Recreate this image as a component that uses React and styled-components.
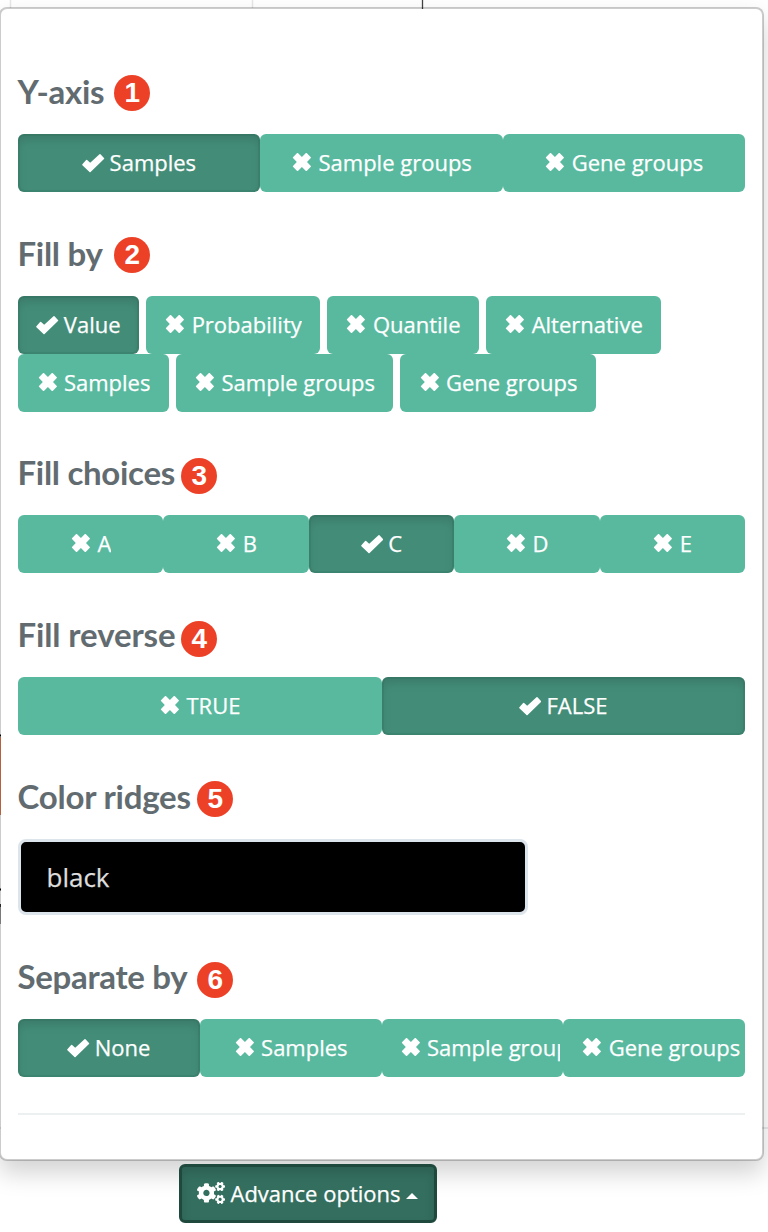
import React from "react";
import styled, { createGlobalStyle, css } from "styled-components";
import { FaCogs } from "react-icons/fa";

const GlobalStyle = createGlobalStyle`
  *, *::before, *::after { box-sizing: border-box; }
  html, body { margin: 0; overflow: hidden; background: #fff; }
  button, input { font-family: "Open Sans", sans-serif; }
`;

const Page = styled.main`
  position: relative;
  width: 768px;
  height: 1232px;
  padding-top: 7px;
  overflow: hidden;
  background: #fff;
  font-family: "Open Sans", sans-serif;
`;

/* Parts of the plot behind the menu that peek out around its edges */
const Plot = styled.svg`
  position: absolute;
  inset: 0;
`;

const Menu = styled.div`
  position: relative;
  width: 765px;
  height: 1154px;
  margin-left: -1px;
  padding: 67px 17px 0;
  border: 2px solid rgba(0, 0, 0, 0.2);
  border-radius: 8px;
  background: #fff;
  background-clip: padding-box;
  box-shadow: 0 12px 24px rgba(0, 0, 0, 0.175);
`;

const Section = styled.section`
  margin-bottom: ${(p) => p.$gap ?? 46}px;
`;

const Heading = styled.div`
  display: flex;
  align-items: flex-start;
  height: 58px;
`;

const Title = styled.h4`
  flex: none;
  width: ${(p) => p.$width}px;
  margin: -1px 0 0 -0.5px;
  color: #626c70;
  font: 700 33px/33px Lato, sans-serif;
  letter-spacing: ${(p) => p.$tracking}px;
  white-space: nowrap;
`;

const Badge = styled.span`
  display: flex;
  align-items: center;
  justify-content: center;
  width: 36px;
  height: 36px;
  margin-top: ${(p) => p.$drop}px;
  border-radius: 50%;
  background: #ed4127;
  color: #fff;
  font: 700 28px/36px "Liberation Sans", sans-serif;
`;

const Group = styled.div`
  display: flex;
`;

const WrapGroup = styled.div`
  display: flex;
  flex-wrap: wrap;
  column-gap: 7px;
`;

const Choice = styled.button`
  display: flex;
  flex: ${(p) => (p.$width ? `0 0 ${p.$width}px` : `0 0 ${100 / p.$share}%`)};
  min-width: 0;
  height: 58px;
  align-items: center;
  justify-content: ${(p) => (p.$clip ? "flex-start" : "center")};
  padding: ${(p) => (p.$clip ? "0 3.5px 2px 18px" : "0 0 2px")};
  border: 0;
  border-radius: 6px;
  background: #58b99f;
  color: #fff;
  font-size: 22px;
  line-height: 30px;
  white-space: nowrap;
  -webkit-text-stroke: 0.25px #fff;
  ${(p) =>
    p.$active &&
    css`
      background: #438d78;
      box-shadow: inset 0 0 0 2px rgba(30, 90, 70, 0.14), inset 0 6px 10px rgba(0, 0, 0, 0.125);
    `}
`;

const ChoiceLabel = styled.span`
  display: flex;
  min-width: 0;
  align-items: center;
  overflow: hidden;
`;

const Mark = styled.svg`
  flex: none;
  width: 22.4px;
  height: 20px;
  margin: ${(p) => (p.$checked ? 1 : -1)}px 5px 0 0;
  fill: currentColor;
`;

const ColorInput = styled.input`
  display: block;
  width: 510px;
  height: 76px;
  padding: 0 25.5px;
  border: 3px solid #dce4ec;
  border-radius: 8px;
  outline: 0;
  background: #000;
  color: #ddd;
  font-size: 26px;
  -webkit-text-stroke: 0.25px #ddd;
`;

const Divider = styled.hr`
  height: 2px;
  margin: 36px 0 0;
  border: 0;
  background: #ecf0f1;
`;

const Toggle = styled.button`
  position: relative;
  display: flex;
  align-items: center;
  width: 258px;
  height: 59px;
  margin: 3px 0 0 179px;
  padding: 0 15px 2px;
  border: 3px solid #20493e;
  border-radius: 6px;
  background: #336e5e;
  box-shadow: inset 0 6px 10px rgba(0, 0, 0, 0.125);
  color: #fff;
  font-size: 22px;
  line-height: 30px;
  white-space: nowrap;
  -webkit-text-stroke: 0.25px #fff;
`;

const CogsIcon = styled(FaCogs)`
  flex: none;
  width: 28px;
  height: 22px;
  margin: 1px 5.5px 0 0;
`;

const Caret = styled.span`
  margin: 7px 0 0 6px;
  border: 6px solid transparent;
  border-top: 0;
  border-bottom-color: #fff;
`;

function ChoiceMark({ checked }) {
  return (
    <Mark viewBox="0 0 22.4 20" $checked={checked} aria-hidden="true">
      {checked ? (
        <path d="M.4 11.2 4.1 6.9q.5-.5 1 0L8.2 9.8 17.5 1.3q.5-.5 1 0L22 5q.5.5 0 1L8.6 19q-.6.5-1.1 0L.4 12.2q-.5-.5 0-1Z" />
      ) : (
        <path d="M6.1 1.1q.4-.4.8 0L10.9 4.9l4-3.8q.4-.4.8 0l4.1 4.1q.4.4 0 .8L16 10l3.8 4q.4.4 0 .8l-4.1 4.1q-.4.4-.8 0l-4-3.8-4 3.8q-.4.4-.8 0L2 14.8q-.4-.4 0-.8l3.8-4L2 6q-.4-.4 0-.8Z" />
      )}
    </Mark>
  );
}

function Option({ label, active, width, share, clip }) {
  return (
    <Choice type="button" $active={active} $width={width} $share={share} $clip={clip}>
      <ChoiceLabel>
        <ChoiceMark checked={active} />
        {label}
      </ChoiceLabel>
    </Choice>
  );
}

function Field({ title, number, titleWidth, tracking = -0.3, drop = 0, gap, children }) {
  return (
    <Section $gap={gap}>
      <Heading>
        <Title $width={titleWidth} $tracking={tracking}>{title}</Title>
        <Badge $drop={drop}>{number}</Badge>
      </Heading>
      {children}
    </Section>
  );
}

export default function App() {
  return (
    <>
      <GlobalStyle />
      <Page>
        <Plot width="768" height="1232" aria-hidden="true">
          <path d="M10.5 0V8M252.5 0V8" stroke="#e6e6e6" strokeWidth="1.5" />
          <path d="M422.5 0V9" stroke="#444" strokeWidth="1.3" />
          <path d="M0 1128H768" stroke="#e6ebec" strokeWidth="2" />
          <path d="M0 735.5H1M0 889.5H1" stroke="#000" strokeWidth="2" />
          <path d="M0 737H1V815H0Z" fill="#e27a4e" />
          <path d="M0 904H1V924H0Z" fill="#999" />
          <path d="M0 905.5H1" stroke="#333" strokeWidth="3" />
        </Plot>
        <Menu>
          <Field title="Y-axis" number="1" titleWidth={96.8} drop={-0.6}>
            <Group>
              <Option share={3} label="Samples" active />
              <Option share={3} label="Sample groups" />
              <Option share={3} label="Gene groups" />
            </Group>
          </Field>
          <Field title="Fill by" number="2" titleWidth={96.8} drop={-0.6} gap={45}>
            <WrapGroup>
              <Option label="Value" active width={121} />
              <Option label="Probability" width={174} />
              <Option label="Quantile" width={152} />
              <Option label="Alternative" width={175} />
              <Option label="Samples" width={151} />
              <Option label="Sample groups" width={217} />
              <Option label="Gene groups" width={196} />
            </WrapGroup>
          </Field>
          <Field title="Fill choices" number="3" titleWidth={163.8} drop={1.3}>
            <Group>
              <Option share={5} label="A" />
              <Option share={5} label="B" />
              <Option share={5} label="C" active />
              <Option share={5} label="D" />
              <Option share={5} label="E" />
            </Group>
          </Field>
          <Field title="Fill reverse" number="4" titleWidth={163.8} tracking={-0.12} drop={2.3}>
            <Group>
              <Option share={2} label="TRUE" />
              <Option share={2} label="FALSE" active />
            </Group>
          </Field>
          <Field title="Color ridges" number="5" titleWidth={179.8} tracking={-0.22}>
            <ColorInput defaultValue="black" aria-label="Color ridges" />
          </Field>
          <Field title="Separate by" number="6" titleWidth={179.8} drop={0.5} gap={0}>
            <Group>
              <Option share={4} label="None" active />
              <Option share={4} label="Samples" />
              <Option share={4} label="Sample groups" clip />
              <Option share={4} label="Gene groups" clip />
            </Group>
          </Field>
          <Divider />
        </Menu>
        <Toggle type="button">
          <CogsIcon preserveAspectRatio="none" />
          Advance options
          <Caret />
        </Toggle>
      </Page>
    </>
  );
}
